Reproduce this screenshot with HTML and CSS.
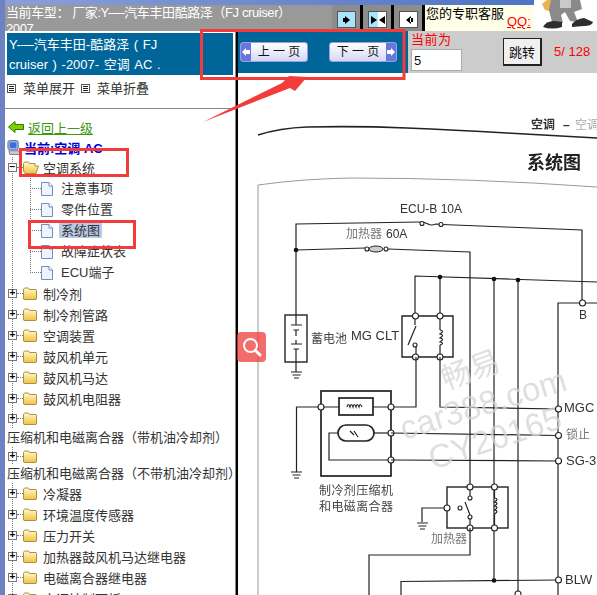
FILE: index.html
```html
<!DOCTYPE html>
<html>
<head>
  <meta charset="utf-8">
  <title>维修手册</title>
  <link rel="stylesheet" href="styles.css">
</head>
<body>

  <svg class="defs" width="0" height="0">
    <symbol id="folder" viewBox="0 0 14 13">
      <defs>
        <linearGradient id="folderFill" x1="0" y1="0" x2="0" y2="1">
          <stop offset="0" stop-color="#fffbd0"/>
          <stop offset="1" stop-color="#f2c23c"/>
        </linearGradient>
      </defs>
      <path d="M0.5 2.5 L1.5 1 H5.5 L6.5 2.5 H13 L13.5 3 V12 L13 12.5 H1 L0.5 12 Z" fill="url(#folderFill)" stroke="#a98f4a"/>
    </symbol>
    <symbol id="folderOpen" viewBox="0 0 16 13">
      <path d="M0.5 2.5 L1.5 1 H5.5 L6.5 2.5 H12 V5 H15.5 L13 12.5 H2 L0.5 10 Z" fill="url(#folderFill)" stroke="#a98f4a"/>
    </symbol>
    <symbol id="doc" viewBox="0 0 12 14">
      <path d="M0.5 0.5 H8 L11.5 4 V13.5 H0.5 Z" fill="#eef3fc" stroke="#6f8fc4"/>
      <path d="M8 0.5 V4 H11.5" fill="#fff" stroke="#6f8fc4"/>
    </symbol>
    <symbol id="menuIcon" viewBox="0 0 9 9">
      <rect x="0.5" y="0.5" width="8" height="8" fill="#fff" stroke="#555"/>
      <path d="M2 2.5 H7 M2 4.5 H7 M2 6.5 H7" stroke="#222"/>
    </symbol>
  </svg>

  <div class="page">

    <header class="topbar">
      <div class="topbar-strip"></div>
      <div class="topbar-row">
        <div class="car-type">当前车型： 厂家:Y-—汽车丰田酷路泽（FJ cruiser）<br>2007</div>
        <div class="tool-btns">
          <div class="tool-btn">
            <div class="tool-face blue">
              <svg width="10" height="10" viewBox="0 0 10 10"><path d="M3 1 L8 5 L3 9 Z M1 3 H4 V7 H1 Z" fill="#000"/></svg>
            </div>
          </div>
          <div class="tool-btn">
            <div class="tool-face half">
              <svg width="16" height="10" viewBox="0 0 16 10"><path d="M1 1 L7 5 L1 9 Z M15 1 L9 5 L15 9 Z" fill="#000"/></svg>
            </div>
          </div>
          <div class="tool-btn">
            <div class="tool-face">
              <svg width="10" height="10" viewBox="0 0 10 10"><path d="M7 1 L2 5 L7 9 Z M6 3 H9 V7 H6 Z" fill="#000"/></svg>
            </div>
          </div>
        </div>
        <div class="service">
          <div>您的专职客服</div>
          <a class="qq">QQ:</a>
        </div>
      </div>
      <div class="mascot">
        <svg width="63" height="31" viewBox="0 0 63 31">
          <path d="M8 4 L13 0 H18 L19 5 L15 11 L11 10 Z" fill="#eeb04a"/>
          <path d="M17 0 H46 L48 9 L40 12 L44 22 L36 21 L31 12 L27 15 L29 23 L18 22 L15 10 Z" fill="#8a8a8a"/>
          <path d="M26 0 H37 V8 H26 Z" fill="#c9c9c9"/>
          <path d="M9 27 Q12 21 20 21 L28 22 L28 27 Q18 30 9 27 Z" fill="#2e2e2e"/>
          <path d="M38 24 Q42 19 50 18 L59 22 Q58 26 50 26 L38 27 Z" fill="#2e2e2e"/>
        </svg>
      </div>
    </header>

    <div class="main">

      <aside class="side">
        <div class="side-title">Y-—汽车丰田-酷路泽 ( FJ cruiser ) -2007- 空调 AC .</div>

        <div class="side-menu">
          <svg class="menu-icon"><use href="#menuIcon"/></svg>
          <span class="menu-text">菜单展开</span>
          <svg class="menu-icon"><use href="#menuIcon"/></svg>
          <span class="menu-text">菜单折叠</span>
        </div>

        <div class="back-row">
          <svg width="16" height="12" viewBox="0 0 16 12">
            <path d="M0.5 6 L7 0.5 V3.5 H15.5 V8.5 H7 V11.5 Z" fill="#7fd000" stroke="#2f7a00"/>
          </svg>
          <a class="back-link">返回上一级</a>
        </div>

        <div class="current-row">
          <svg width="14" height="17" viewBox="0 0 15 17">
            <rect x="1" y="1" width="11" height="10" rx="2" fill="#9fb6dc" stroke="#5c6f99"/>
            <rect x="3" y="3" width="7" height="6" fill="#3c6ed8"/>
            <path d="M2 12 H13 L14 16 H3 Z" fill="#c9c9d8" stroke="#7b7b90"/>
          </svg>
          <span class="current-text">当前:空调 AC</span>
        </div>

        <div class="tree">
          <div class="row">
            <span class="toggle">−</span><span class="branch"></span>
            <svg class="folder open"><use href="#folderOpen"/></svg>
            <span class="label">空调系统</span>
          </div>

          <div class="children">
            <div class="leaf"><span class="leaf-branch"></span><svg class="doc"><use href="#doc"/></svg><span class="leaf-label">注意事项</span></div>
            <div class="leaf"><span class="leaf-branch"></span><svg class="doc"><use href="#doc"/></svg><span class="leaf-label">零件位置</span></div>
            <div class="leaf"><span class="leaf-branch"></span><svg class="doc"><use href="#doc"/></svg><span class="leaf-label selected">系统图</span></div>
            <div class="leaf"><span class="leaf-branch"></span><svg class="doc"><use href="#doc"/></svg><span class="leaf-label">故障症状表</span></div>
            <div class="leaf"><span class="leaf-branch"></span><svg class="doc"><use href="#doc"/></svg><span class="leaf-label">ECU端子</span></div>
          </div>

          <div class="row"><span class="toggle">+</span><span class="branch"></span><svg class="folder"><use href="#folder"/></svg><span class="label">制冷剂</span></div>
          <div class="row"><span class="toggle">+</span><span class="branch"></span><svg class="folder"><use href="#folder"/></svg><span class="label">制冷剂管路</span></div>
          <div class="row"><span class="toggle">+</span><span class="branch"></span><svg class="folder"><use href="#folder"/></svg><span class="label">空调装置</span></div>
          <div class="row"><span class="toggle">+</span><span class="branch"></span><svg class="folder"><use href="#folder"/></svg><span class="label">鼓风机单元</span></div>
          <div class="row"><span class="toggle">+</span><span class="branch"></span><svg class="folder"><use href="#folder"/></svg><span class="label">鼓风机马达</span></div>
          <div class="row"><span class="toggle">+</span><span class="branch"></span><svg class="folder"><use href="#folder"/></svg><span class="label">鼓风机电阻器</span></div>

          <div class="row short"><span class="toggle">+</span><span class="branch"></span><svg class="folder"><use href="#folder"/></svg></div>
          <div class="long-label">压缩机和电磁离合器（带机油冷却剂）</div>
          <div class="row shorter"><span class="toggle">+</span><span class="branch"></span><svg class="folder"><use href="#folder"/></svg></div>
          <div class="long-label tight">压缩机和电磁离合器（不带机油冷却剂）</div>

          <div class="row"><span class="toggle">+</span><span class="branch"></span><svg class="folder"><use href="#folder"/></svg><span class="label">冷凝器</span></div>
          <div class="row"><span class="toggle">+</span><span class="branch"></span><svg class="folder"><use href="#folder"/></svg><span class="label">环境温度传感器</span></div>
          <div class="row"><span class="toggle">+</span><span class="branch"></span><svg class="folder"><use href="#folder"/></svg><span class="label">压力开关</span></div>
          <div class="row"><span class="toggle">+</span><span class="branch"></span><svg class="folder"><use href="#folder"/></svg><span class="label">加热器鼓风机马达继电器</span></div>
          <div class="row"><span class="toggle">+</span><span class="branch"></span><svg class="folder"><use href="#folder"/></svg><span class="label">电磁离合器继电器</span></div>
          <div class="row"><span class="toggle">+</span><span class="branch"></span><svg class="folder"><use href="#folder"/></svg><span class="label">空调控制面板</span></div>
        </div>
      </aside>

      <main class="content">
        <div class="toolbar">
          <div class="pager">
            <div class="page-btn">
              <span class="page-arrow">
                <svg width="8" height="8" viewBox="0 0 8 8"><path d="M0 4 L4 0 V2 H8 V6 H4 V8 Z" fill="#fff"/></svg>
              </span>
              <span class="page-text">上 一 页</span>
            </div>
            <div class="page-btn">
              <span class="page-text">下 一 页</span>
              <span class="page-arrow">
                <svg width="8" height="8" viewBox="0 0 8 8"><path d="M8 4 L4 0 V2 H0 V6 H4 V8 Z" fill="#fff"/></svg>
              </span>
            </div>
          </div>
          <div class="goto">
            <div class="goto-field">
              <div class="goto-label">当前为</div>
              <input class="goto-input" type="text" value="5">
            </div>
            <button class="goto-btn">跳转</button>
            <div class="page-count">5/ 128</div>
          </div>
        </div>

        <svg class="diagram" viewBox="238 73 359 522" width="359" height="522">
          <!-- page head -->
          <path class="head-line" d="M258 135 Q280 128 307 127 Q360 126 407 128 T507 133 L597 138"/>
          <text class="head-small" x="531" y="129">空调</text>
          <text class="head-small" x="563" y="129" fill="#999">–</text>
          <text class="head-small light" x="575" y="129">空调</text>
          <text class="title" x="527" y="169">系统图</text>
          <path class="frame" d="M258 595 V185 Q300 179 350 178 Q470 178 597 187"/>

          <!-- top wires -->
          <path class="wire" d="M296 315 V224 L420 222"/>
          <path class="wire" d="M442 224.5 L582 230 V303"/>
          <path class="wire" d="M296 250 L365 248"/>
          <path class="wire" d="M388 249 L470 252 V487"/>
          <path class="wire" d="M420 222 Q425 222 428 224 T436 224 L442 224.5"/>
          <circle class="pin" cx="422" cy="223.5" r="2"/>
          <circle class="pin" cx="441" cy="224.5" r="2"/>
          <circle class="pin" cx="367" cy="249" r="2"/>
          <circle class="pin" cx="386" cy="249" r="2"/>
          <ellipse class="fuse" cx="376" cy="249" rx="7" ry="3"/>
          <circle class="dot" cx="296" cy="250" r="2.3"/>
          <text class="label-en" x="400" y="213">ECU-B 10A</text>
          <text class="label-cn light" x="346" y="238">加热器</text>
          <text class="label-en" x="386" y="238">60A</text>

          <path class="wire" d="M415 316 V276 L597 282"/>
          <path class="wire" d="M440 277 V316"/>
          <path class="wire" d="M494 279 V580"/>
          <path class="wire" d="M518 280 V595"/>
          <circle class="dot" cx="440" cy="277" r="2.3"/>
          <circle class="dot" cx="494" cy="279" r="2.3"/>
          <circle class="dot" cx="518" cy="280" r="2.3"/>

          <path class="wire" d="M558 595 V303 H597"/>
          <circle class="pin big" cx="582.5" cy="303" r="3"/>
          <text class="label-en" x="579" y="319">B</text>

          <!-- battery -->
          <rect class="box" x="285" y="315" width="22" height="47"/>
          <path class="wire" d="M296 315 V325 M291 325 H302 M293.5 330 H299 M296 330 V336 M296 340 V344 M291 344 H302 M293.5 349 H299 M296 349 V372"/>
          <path class="wire" d="M291 372 H302 M292.5 375 H300.5 M294 378 H299"/>
          <text class="label-cn" x="311" y="343">蓄电池</text>
          <text class="label-en big" x="351" y="340">MG CLT</text>

          <!-- mg clt relay -->
          <path class="box" d="M415 316 H402 V357 H453 V316 H440 M415 316 H440"/>
          <path class="wire" d="M415 316 V325 M416 326 L408 345 M416 347 V357 M440 316 V330 M440 345 V357"/>
          <path class="wire" d="M440 330 q5 1 0 4 q5 1 0 4 q5 1 0 4 q5 1 0 3"/>
          <circle class="pin" cx="415" cy="345" r="2"/>
          <circle class="pin big" cx="415.5" cy="316" r="3"/>
          <circle class="pin big" cx="440" cy="316" r="3"/>
          <circle class="pin big" cx="415.5" cy="357" r="3"/>
          <circle class="pin big" cx="440" cy="357" r="3"/>

          <!-- compressor -->
          <rect class="box heavy" x="321" y="391" width="70" height="85"/>
          <rect class="box heavy" x="339" y="398" width="34" height="17"/>
          <path class="wire" d="M321 407 H339 M373 407 H416 V357"/>
          <path class="wire" d="M347 407 q1 -5 3 0 q1 -5 3 0 q1 -5 3 0 q1 -5 3 0 q1 -5 3 0"/>
          <path class="wire" d="M321 407 H296.5 V472 M291 472 H302 M292.5 475 H300.5 M294 478 H299"/>
          <rect class="box heavy" x="338" y="425" width="36" height="16" rx="8"/>
          <path class="wire" d="M350 431 L354 435 M354 431 L358 437"/>
          <path class="wire" d="M338 433 H329 V460 H391"/>
          <path class="wire" d="M374 433 H391"/>
          <circle class="pin big" cx="321" cy="407" r="3"/>
          <circle class="pin big" cx="391" cy="407" r="3"/>
          <circle class="pin big" cx="391" cy="433" r="3"/>
          <circle class="pin big" cx="391" cy="460" r="3"/>
          <text class="label-cn" x="319" y="495" textLength="74">制冷剂压缩机</text>
          <text class="label-cn" x="319" y="511" textLength="74">和电磁离合器</text>

          <!-- signal lines -->
          <path class="wire" d="M440 357 V407 L558 409"/>
          <path class="wire" d="M391 433 L558 435.5"/>
          <path class="wire" d="M391 460 L558 461"/>
          <path class="wire" d="M401 595 V581.5 L558 580"/>
          <circle class="dot" cx="494" cy="580.5" r="2.3"/>
          <circle class="pin big" cx="558.5" cy="409" r="3"/>
          <circle class="pin big" cx="558.5" cy="435.5" r="3"/>
          <circle class="pin big" cx="558.5" cy="461" r="3"/>
          <circle class="pin big" cx="558.5" cy="580" r="3"/>
          <circle class="pin big" cx="518" cy="594" r="3"/>
          <text class="label-en big" x="564" y="412">MGC</text>
          <text class="label-cn light" x="566" y="439">锁止</text>
          <text class="label-en big" x="566" y="465">SG-3</text>
          <text class="label-en big" x="565" y="584">BLW</text>

          <!-- heater relay -->
          <rect class="box" x="447" y="487" width="61" height="41"/>
          <path class="wire" d="M470 487 V496 M470 519 V528 M465 502 L470 515 M494.5 487 V498 M494.5 514 V528"/>
          <path class="wire" d="M494.5 498 q5 1 0 4 q5 1 0 4 q5 1 0 4 q5 1 0 4"/>
          <circle class="pin" cx="470" cy="498" r="2"/>
          <circle class="pin" cx="460" cy="508" r="2"/>
          <circle class="pin" cx="470" cy="517" r="2"/>
          <path class="wire" d="M447 508 H422 V522 M417 523 H428 M418.5 526 H426.5 M420 529 H425"/>
          <circle class="pin big" cx="470" cy="487" r="3"/>
          <circle class="pin big" cx="494.5" cy="487" r="3"/>
          <circle class="pin big" cx="447" cy="508" r="3"/>
          <circle class="pin big" cx="470" cy="528" r="3"/>
          <circle class="pin big" cx="494.5" cy="528" r="3"/>
          <text class="label-cn light" x="431" y="543">加热器</text>
          <path class="wire" d="M470 528 V555 H369 V595"/>

          <!-- watermark -->
          <text class="mark small" x="446" y="390" transform="rotate(-20 446 390)">畅易</text>
          <text class="mark" x="404" y="440" transform="rotate(-17 404 440)">car388.com</text>
          <text class="mark" x="433" y="470" transform="rotate(-18 433 470)">CY20165</text>
        </svg>
      </main>
    </div>

    <div class="search-btn">
      <svg width="20" height="20" viewBox="0 0 20 20">
        <circle cx="8.5" cy="8.5" r="6.5" fill="none" stroke="#fff" stroke-width="2"/>
        <path d="M13.5 13.5 L18 18" stroke="#fff" stroke-width="3" stroke-linecap="round"/>
      </svg>
    </div>

    <svg class="marks" width="597" height="595" viewBox="0 0 597 595">
      <rect x="201.5" y="30.5" width="202.5" height="48"/>
      <rect x="20.5" y="149.5" width="107" height="26"/>
      <rect x="29.5" y="221.5" width="105" height="26"/>
      <path class="arrow" d="M203 122 L282 83 L289 76 L307 77 L295 91 L290 88 Z"/>
    </svg>

  </div>

</body>
</html>
```

FILE: styles.css
```css
* {
  box-sizing: border-box;
}

body {
  margin: 0;
  background-color: #fff;
  font-family: "Liberation Sans", "Noto Sans CJK SC", sans-serif;
  font-size: 13px;
  color: #333;
}

.defs {
  display: block;
  height: 0;
}

.page {
  position: relative;
  width: 597px;
  height: 595px;
  overflow: hidden;
  border-left: 5px solid #6d82c2;
}

/* top bar */
.topbar {
  position: relative;
  height: 31px;
  margin-left: -5px;
  background-color: #999;
}

.topbar-strip {
  height: 5px;
  width: 534px;
  background: linear-gradient(to right, #8ba0d8, #4f74c4);
}

.topbar-row {
  display: flex;
  height: 26px;
}

.car-type {
  width: 332px;
  height: 26px;
  padding: 0 0 0 6px;
  overflow: hidden;
  font-size: 13px;
  line-height: 16px;
  letter-spacing: -0.4px;
  white-space: nowrap;
  color: #fff;
}

.tool-btns {
  display: flex;
  width: 93px;
}

.tool-btn {
  width: 31px;
  height: 26px;
  padding: 6px 4px 2px 5px;
  background-color: #8c8c8c;
  border-right: 3px solid #000;
}

.tool-face {
  display: flex;
  align-items: center;
  justify-content: center;
  height: 17px;
  background-color: #fff;
  border: 1px solid #555;
}

.tool-face.blue {
  background-color: #a8e4fa;
}

.tool-face.half {
  background: linear-gradient(to right, #a8e4fa 50%, #fff 50%);
}

.service {
  position: relative;
  width: 109px;
  height: 26px;
  overflow: hidden;
  padding-left: 1px;
  background-color: #ffffe8;
  line-height: 18px;
  color: #000;
}

.qq {
  display: block;
  margin: -10px 0 0 81px;
  line-height: 17px;
  color: #f00;
  text-decoration: underline;
}

.mascot {
  position: absolute;
  top: 0;
  right: 0;
  width: 63px;
  height: 31px;
  background-color: #fff;
}

.mascot svg {
  display: block;
}

/* main columns */
.main {
  display: flex;
  height: 564px;
}

.side {
  width: 231px;
  height: 564px;
  overflow: hidden;
  padding-top: 2px;
  border-right: 1px solid #888;
  background-color: #fff;
}

.side-title {
  height: 42px;
  margin: 0 2px;
  padding: 2px 50px 0 2px;
  background-color: #006699;
  font-size: 13px;
  line-height: 20px;
  word-spacing: 1px;
  color: #fff;
}

.side-menu {
  display: flex;
  align-items: flex-start;
  height: 34px;
  padding: 5px 0 0 2px;
  border-bottom: 1px solid #888;
}

.menu-icon {
  width: 9px;
  height: 9px;
  margin-top: 4px;
}

.menu-text {
  margin: 0 6px 0 7px;
  line-height: 18px;
}

.back-row {
  display: flex;
  align-items: center;
  height: 20px;
  margin-top: 8px;
  padding-left: 3px;
}

.back-link {
  margin-left: 4px;
  color: #3a9a10;
  text-decoration: underline;
}

.current-row {
  display: flex;
  align-items: center;
  height: 20px;
  padding-left: 2px;
}

.current-text {
  margin-left: 3px;
  font-weight: bold;
  color: #0000e0;
}

/* tree */
.tree {
  background-image: repeating-linear-gradient(to bottom, #777 0, #777 1px, transparent 1px, transparent 2px);
  background-size: 1px 100%;
  background-position: 7px 0;
  background-repeat: no-repeat;
}

.row {
  display: flex;
  align-items: center;
  height: 21px;
}

.row.short {
  height: 19px;
}

.row.shorter {
  height: 18px;
}

.toggle {
  display: block;
  width: 9px;
  height: 9px;
  margin-left: 3px;
  border: 1px solid #777;
  background-color: #fff;
  font-size: 10px;
  line-height: 6px;
  font-weight: bold;
  text-align: center;
  color: #000;
}

.branch {
  width: 6px;
  border-top: 1px dotted #777;
}

.folder {
  width: 14px;
  height: 13px;
}

.folder.open {
  width: 16px;
}

.label {
  margin-left: 6px;
}

.folder.open + .label {
  margin-left: 4px;
}

.long-label {
  height: 19px;
  padding-left: 2px;
  background-color: #fff;
  line-height: 19px;
  white-space: nowrap;
}

.long-label.tight {
  height: 18px;
  line-height: 18px;
}

.children {
  background-image: repeating-linear-gradient(to bottom, #777 0, #777 1px, transparent 1px, transparent 2px);
  background-size: 1px 95px;
  background-position: 25px 0;
  background-repeat: no-repeat;
}

.leaf {
  display: flex;
  align-items: center;
  height: 21px;
  padding-left: 25px;
}

.leaf-branch {
  width: 11px;
  border-top: 1px dotted #777;
}

.doc {
  width: 12px;
  height: 14px;
}

.leaf-label {
  margin-left: 6px;
  padding: 0 2px;
  line-height: 15px;
}

.leaf-label.selected {
  background-color: #b9cae6;
}

/* toolbar */
.content {
  width: 361px;
  border-left: 2px solid #000;
}

.toolbar {
  display: flex;
  height: 42px;
}

.pager {
  display: flex;
  align-items: center;
  justify-content: space-between;
  width: 170px;
  padding: 0 11px 0 2px;
  background-color: #006699;
}

.page-btn {
  display: flex;
  align-items: stretch;
  width: 68px;
  height: 20px;
  overflow: hidden;
  border: 1px solid #9aa0e8;
  border-radius: 3px;
  background: linear-gradient(to bottom, #fff, #d6d8f4);
}

.page-arrow {
  display: flex;
  align-items: center;
  justify-content: center;
  width: 10px;
  background-color: #6678dc;
}

.page-text {
  flex: 1;
  font-size: 12px;
  line-height: 18px;
  text-align: center;
  color: #111;
}

.goto {
  display: flex;
  flex: 1;
  padding: 0 0 0 3px;
  background-color: #ccc;
}

.goto-field {
  width: 92px;
}

.goto-label {
  height: 18px;
  line-height: 18px;
  color: #f00;
  letter-spacing: 0.5px;
}

.goto-input {
  display: block;
  width: 51px;
  height: 22px;
  padding: 0 2px;
  border: 1px solid #aaa;
  font-family: "Liberation Sans", sans-serif;
  font-size: 13px;
  color: #111;
}

.goto-btn {
  width: 39px;
  height: 28px;
  margin-top: 7px;
  padding: 0;
  border: 1px solid #222;
  border-width: 1px 2px 2px 1px;
  background-color: #f0f0f0;
  font-family: "Liberation Sans", "Noto Sans CJK SC", sans-serif;
  font-size: 13px;
  color: #111;
}

.page-count {
  margin: 13px 0 0 12px;
  line-height: 16px;
  font-size: 13px;
  color: #f00;
}

/* diagram */
.diagram {
  display: block;
  filter: blur(0.35px);
}

.head-line {
  fill: none;
  stroke: #222;
  stroke-width: 1.6;
}

.frame {
  fill: none;
  stroke: #999;
  stroke-width: 1;
}

.wire,
.box {
  fill: none;
  stroke: #222;
  stroke-width: 1.2;
}

.box {
  stroke-width: 1.4;
}

.box.heavy {
  stroke-width: 1.7;
}

.pin {
  fill: #fff;
  stroke: #222;
  stroke-width: 1.1;
}

.fuse {
  fill: #ccc;
  stroke: #222;
}

.dot {
  fill: #111;
}

.head-small {
  font-size: 12px;
  font-weight: bold;
  fill: #333;
}

.head-small.light {
  font-weight: normal;
  fill: #aaa;
}

.title {
  font-size: 18px;
  font-weight: bold;
  fill: #222;
}

.label-en {
  font-size: 12px;
  fill: #333;
}

.label-en.big {
  font-size: 13px;
}

.label-cn {
  font-size: 12px;
  fill: #444;
}

.label-cn.light {
  fill: #777;
}

.mark {
  font-size: 33px;
  fill: #d4d4d4;
  opacity: 0.75;
}

.mark.small {
  font-size: 30px;
}

/* floating search button */
.search-btn {
  position: absolute;
  top: 332px;
  left: 232px;
  display: flex;
  align-items: center;
  justify-content: center;
  width: 29px;
  height: 30px;
  border-radius: 4px;
  background-color: rgba(240, 60, 60, 0.75);
}

/* red marks drawn on the screenshot */
.marks {
  position: absolute;
  top: 0;
  left: -5px;
  pointer-events: none;
}

.marks rect {
  fill: none;
  stroke: #f23c3c;
  stroke-width: 3;
}

.marks .arrow {
  fill: #f23c3c;
}
```
